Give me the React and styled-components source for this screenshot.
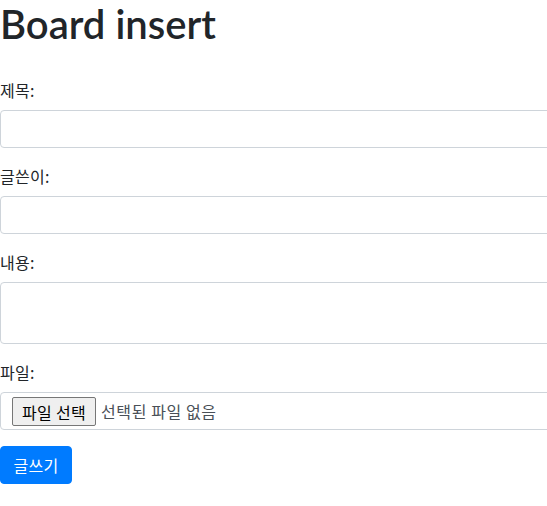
import React from 'react'
import styled, { createGlobalStyle } from 'styled-components'

const GlobalStyle = createGlobalStyle`
  body {
    margin: 0;
    overflow: hidden;
    background: #fff;
    color: #212529;
    font-family: "Noto Sans", "Noto Sans CJK KR", sans-serif;
    font-size: 16px;
    line-height: 1.5;
  }
`

const Page = styled.div`
  width: 547px;
`

const Title = styled.h1`
  margin: 0 0 30px;
  height: 48px;
  font-family: Lato, "Noto Sans", sans-serif;
  font-size: 40px;
  font-weight: 600;
  line-height: 48px;
  color: #212529;
`

const Form = styled.form`
  display: flex;
  flex-direction: column;
  width: 580px;
`

const Group = styled.div`
  display: flex;
  flex-direction: column;
  margin-bottom: 16px;
`

const Label = styled.label`
  font-family: "Noto Sans CJK KR", sans-serif;
  font-size: 16px;
  line-height: 24px;
  margin-bottom: 8px;
  letter-spacing: 0.3px;
`

const Input = styled.input`
  box-sizing: border-box;
  width: 100%;
  height: 38px;
  padding: 6px 12px;
  border: 1px solid #ced4da;
  border-radius: 4px;
  font-size: 16px;
  color: #495057;
  outline: none;
`

const TextArea = styled.textarea`
  box-sizing: border-box;
  width: 100%;
  height: 62px;
  padding: 6px 12px;
  border: 1px solid #ced4da;
  border-radius: 4px;
  resize: none;
  font-size: 16px;
  color: #495057;
  outline: none;
`

const FileBox = styled.div`
  box-sizing: border-box;
  display: flex;
  align-items: center;
  height: 38px;
  padding: 0 10px 0 11px;
  border: 1px solid #ced4da;
  border-radius: 4px;
  font-family: "Noto Sans CJK KR", sans-serif;
`

const FileButton = styled.span`
  box-sizing: border-box;
  display: inline-flex;
  align-items: center;
  justify-content: center;
  width: 84px;
  height: 29px;
  margin-top: 1px;
  margin-right: 5px;
  background: #efefef;
  border: 1px solid #767676;
  border-radius: 2px;
  color: #000;
  font-size: 16px;
  line-height: 1;
  letter-spacing: 0.3px;
`

const FileName = styled.span`
  font-size: 16px;
  color: #495057;
  letter-spacing: 0.6px;
`

const SubmitButton = styled.button`
  align-self: flex-start;
  box-sizing: border-box;
  width: 72px;
  height: 38px;
  padding: 0;
  background: #007bff;
  border: 1px solid #007bff;
  border-radius: 4px;
  color: #fff;
  font-family: "Noto Sans CJK KR", sans-serif;
  font-size: 16px;
  letter-spacing: 0.3px;
`

export default function App () {
  return (
    <Page>
      <GlobalStyle />
      <Title>Board insert</Title>
      <Form onSubmit={e => e.preventDefault()}>
        <Group>
          <Label>제목:</Label>
          <Input type='text' />
        </Group>
        <Group>
          <Label>글쓴이:</Label>
          <Input type='text' />
        </Group>
        <Group>
          <Label>내용:</Label>
          <TextArea rows={2} />
        </Group>
        <Group>
          <Label>파일:</Label>
          <FileBox>
            <FileButton>파일 선택</FileButton>
            <FileName>선택된 파일 없음</FileName>
          </FileBox>
        </Group>
        <SubmitButton type='submit'>글쓰기</SubmitButton>
      </Form>
    </Page>
  )
}
